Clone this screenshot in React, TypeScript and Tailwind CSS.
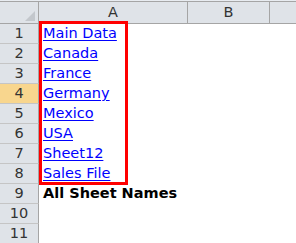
import React from 'react';

const rows: { n: number; text?: string; link?: boolean; bold?: boolean }[] = [
  { n: 1, text: 'Main Data', link: true },
  { n: 2, text: 'Canada', link: true },
  { n: 3, text: 'France', link: true },
  { n: 4, text: 'Germany', link: true },
  { n: 5, text: 'Mexico', link: true },
  { n: 6, text: 'USA', link: true },
  { n: 7, text: 'Sheet12', link: true },
  { n: 8, text: 'Sales File', link: true },
  { n: 9, text: 'All Sheet Names', bold: true },
  { n: 10 },
  { n: 11 },
];

const font = { fontFamily: '"DejaVu Sans", Tahoma, sans-serif' };

export default function App() {
  return (
    <div className="relative h-[243px] w-[296px] overflow-hidden bg-white text-[14.5px]" style={font}>
      <div className="h-[1px] bg-[#e8ecf1]" />
      <div className="flex h-[23px] border-y border-[#a5a5a5] bg-[#dfe3e8] text-[#333]">
        <div className="relative w-[39px] border-r border-[#a5a5a5]">
          <div className="absolute bottom-[2px] right-[3px] h-0 w-0 border-b-[10px] border-l-[10px] border-b-[#c3c7cc] border-l-transparent" />
        </div>
        <div className="flex w-[149px] items-center justify-center border-r border-[#a5a5a5]">A</div>
        <div className="flex w-[82px] items-center justify-center border-r border-[#a5a5a5]">B</div>
        <div className="flex-1" />
      </div>
      {rows.map((r) => (
        <div key={r.n} className="flex h-[20px]">
          <div
            className={`flex w-[39px] items-center justify-center border-b border-r border-b-[#c5c5c5] border-r-[#a5a5a5] text-[#333] ${
              r.n === 4 ? 'bg-[#f8d68e]' : 'bg-[#dfe3e8]'
            }`}
          >
            {r.n}
          </div>
          <div className="flex flex-1 items-center whitespace-nowrap pl-[4px]">
            {r.link && <span className="text-[#0000ff] underline underline-offset-2">{r.text}</span>}
            {r.bold && <span className="font-bold text-black">{r.text}</span>}
          </div>
        </div>
      ))}
      <div className="absolute left-[39px] top-[21px] h-[164px] w-[89px] border-[3px] border-[#ff0000]" />
    </div>
  );
}
